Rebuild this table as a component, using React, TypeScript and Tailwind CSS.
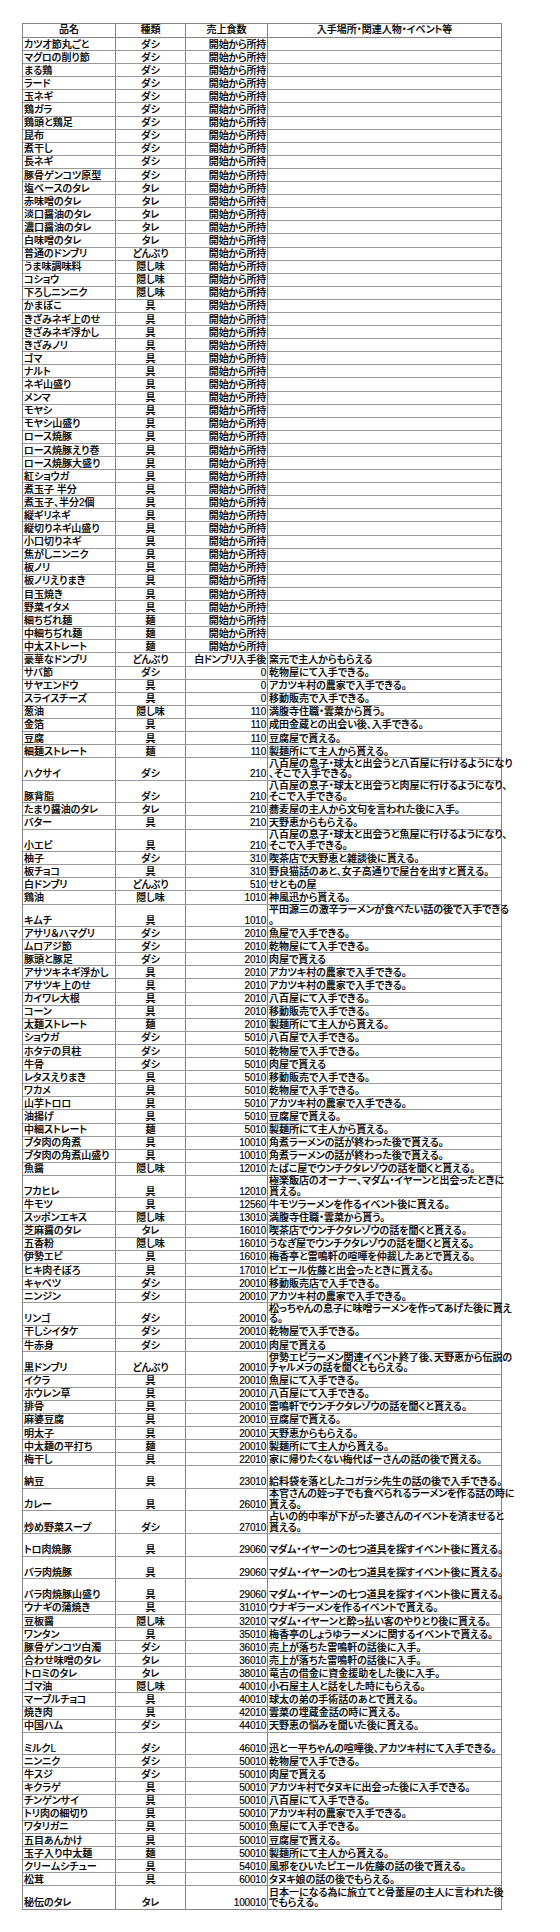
import React from "react";

type Row = [string, string, string, string, boolean?];

const START = "開始から所持";

const starters: [string, string][] = [
  ["カツオ節丸ごと", "ダシ"],
  ["マグロの削り節", "ダシ"],
  ["まる鶏", "ダシ"],
  ["ラード", "ダシ"],
  ["玉ネギ", "ダシ"],
  ["鶏ガラ", "ダシ"],
  ["鶏頭と鶏足", "ダシ"],
  ["昆布", "ダシ"],
  ["煮干し", "ダシ"],
  ["長ネギ", "ダシ"],
  ["豚骨ゲンコツ原型", "ダシ"],
  ["塩ベースのタレ", "タレ"],
  ["赤味噌のタレ", "タレ"],
  ["淡口醤油のタレ", "タレ"],
  ["濃口醤油のタレ", "タレ"],
  ["白味噌のタレ", "タレ"],
  ["普通のドンブリ", "どんぶり"],
  ["うま味調味料", "隠し味"],
  ["コショウ", "隠し味"],
  ["下ろしニンニク", "隠し味"],
  ["かまぼこ", "具"],
  ["きざみネギ上のせ", "具"],
  ["きざみネギ浮かし", "具"],
  ["きざみノリ", "具"],
  ["ゴマ", "具"],
  ["ナルト", "具"],
  ["ネギ山盛り", "具"],
  ["メンマ", "具"],
  ["モヤシ", "具"],
  ["モヤシ山盛り", "具"],
  ["ロース焼豚", "具"],
  ["ロース焼豚えり巻", "具"],
  ["ロース焼豚大盛り", "具"],
  ["紅ショウガ", "具"],
  ["煮玉子 半分", "具"],
  ["煮玉子、半分2個", "具"],
  ["縦ギリネギ", "具"],
  ["縦切りネギ山盛り", "具"],
  ["小口切りネギ", "具"],
  ["焦がしニンニク", "具"],
  ["板ノリ", "具"],
  ["板ノリえりまき", "具"],
  ["目玉焼き", "具"],
  ["野菜イタメ", "具"],
  ["細ちぢれ麺", "麺"],
  ["中細ちぢれ麺", "麺"],
  ["中太ストレート", "麺"],
];

const madam = "マダム・イヤーンの七つ道具を探すイベント後に貰える。";

const rows: Row[] = [
  ...starters.map(([n, t]): Row => [n, t, START, ""]),
  ["豪華なドンブリ", "どんぶり", "白ドンブリ入手後", "窯元で主人からもらえる"],
  ["サバ節", "ダシ", "0", "乾物屋にて入手できる。"],
  ["サヤエンドウ", "具", "0", "アカツキ村の農家で入手できる。"],
  ["スライスチーズ", "具", "0", "移動販売で入手できる。"],
  ["葱油", "隠し味", "110", "満腹寺住職・雲菜から貰う。"],
  ["金箔", "具", "110", "成田金蔵との出会い後、入手できる。"],
  ["豆腐", "具", "110", "豆腐屋で貰える。"],
  ["細麺ストレート", "麺", "110", "製麺所にて主人から貰える。"],
  ["ハクサイ", "ダシ", "210", "八百屋の息子・球太と出会うと八百屋に行けるようになり\n、そこで入手できる。"],
  ["豚背脂", "ダシ", "210", "八百屋の息子・球太と出会うと肉屋に行けるようになり、\nそこで入手できる。"],
  ["たまり醤油のタレ", "タレ", "210", "蕎麦屋の主人から文句を言われた後に入手。"],
  ["バター", "具", "210", "天野恵からもらえる。"],
  ["小エビ", "具", "210", "八百屋の息子・球太と出会うと魚屋に行けるようになり、\nそこで入手できる。"],
  ["柚子", "ダシ", "310", "喫茶店で天野恵と雑談後に貰える。"],
  ["板チョコ", "具", "310", "野良猫話のあと、女子高通りで屋台を出すと貰える。"],
  ["白ドンブリ", "どんぶり", "510", "せともの屋"],
  ["鶏油", "隠し味", "1010", "神風迅から貰える。"],
  ["キムチ", "具", "1010", "平田源三の激辛ラーメンが食べたい話の後で入手できる\n。"],
  ["アサリ＆ハマグリ", "ダシ", "2010", "魚屋で入手できる。"],
  ["ムロアジ節", "ダシ", "2010", "乾物屋にて入手できる。"],
  ["豚頭と豚足", "ダシ", "2010", "肉屋で貰える"],
  ["アサツキネギ浮かし", "具", "2010", "アカツキ村の農家で入手できる。"],
  ["アサツキ上のせ", "具", "2010", "アカツキ村の農家で入手できる。"],
  ["カイワレ大根", "具", "2010", "八百屋にて入手できる。"],
  ["コーン", "具", "2010", "移動販売で入手できる。"],
  ["太麺ストレート", "麺", "2010", "製麺所にて主人から貰える。"],
  ["ショウガ", "ダシ", "5010", "八百屋で入手できる。"],
  ["ホタテの貝柱", "ダシ", "5010", "乾物屋で入手できる。"],
  ["牛骨", "ダシ", "5010", "肉屋で貰える"],
  ["レタスえりまき", "具", "5010", "移動販売で入手できる。"],
  ["ワカメ", "具", "5010", "乾物屋で入手できる。"],
  ["山芋トロロ", "具", "5010", "アカツキ村の農家で入手できる。"],
  ["油揚げ", "具", "5010", "豆腐屋で貰える。"],
  ["中細ストレート", "麺", "5010", "製麺所にて主人から貰える。"],
  ["ブタ肉の角煮", "具", "10010", "角煮ラーメンの話が終わった後で貰える。"],
  ["ブタ肉の角煮山盛り", "具", "10010", "角煮ラーメンの話が終わった後で貰える。"],
  ["魚醤", "隠し味", "12010", "たばこ屋でウンチクタレゾウの話を聞くと貰える。"],
  ["フカヒレ", "具", "12010", "極楽飯店のオーナー、マダム・イヤーンと出会ったときに\n貰える。"],
  ["牛モツ", "具", "12560", "牛モツラーメンを作るイベント後に貰える。"],
  ["スッポンエキス", "隠し味", "13010", "満腹寺住職・雲菜から貰う。"],
  ["芝麻醤のタレ", "タレ", "16010", "喫茶店でウンチクタレゾウの話を聞くと貰える。"],
  ["五香粉", "隠し味", "16010", "うなぎ屋でウンチクタレゾウの話を聞くと貰える。"],
  ["伊勢エビ", "具", "16010", "梅香亭と雷鳴軒の喧嘩を仲裁したあとで貰える。"],
  ["ヒキ肉そぼろ", "具", "17010", "ピエール佐藤と出会ったときに貰える。"],
  ["キャベツ", "ダシ", "20010", "移動販売店で入手できる。"],
  ["ニンジン", "ダシ", "20010", "アカツキ村の農家で入手できる。"],
  ["リンゴ", "ダシ", "20010", "松っちゃんの息子に味噌ラーメンを作ってあげた後に貰え\nる。"],
  ["干しシイタケ", "ダシ", "20010", "乾物屋で入手できる。"],
  ["牛赤身", "ダシ", "20010", "肉屋で貰える"],
  ["黒ドンブリ", "どんぶり", "20010", "伊勢エビラーメン関連イベント終了後、天野恵から伝説の\nチャルメラの話を聞くともらえる。"],
  ["イクラ", "具", "20010", "魚屋にて入手できる。"],
  ["ホウレン草", "具", "20010", "八百屋にて入手できる。"],
  ["排骨", "具", "20010", "雷鳴軒でウンチクタレゾウの話を聞くと貰える。"],
  ["麻婆豆腐", "具", "20010", "豆腐屋で貰える。"],
  ["明太子", "具", "20010", "天野恵からもらえる。"],
  ["中太麺の平打ち", "麺", "20010", "製麺所にて主人から貰える。"],
  ["梅干し", "具", "22010", "家に帰りたくない梅代ばーさんの話の後で貰える。"],
  ["納豆", "具", "23010", "給料袋を落としたコガラシ先生の話の後で入手できる。", true],
  ["カレー", "具", "26010", "本官さんの姪っ子でも食べられるラーメンを作る話の時に\n貰える。"],
  ["炒め野菜スープ", "ダシ", "27010", "占いの的中率が下がった婆さんのイベントを済ませると\n貰える。"],
  ["トロ肉焼豚", "具", "29060", madam, true],
  ["バラ肉焼豚", "具", "29060", madam, true],
  ["バラ肉焼豚山盛り", "具", "29060", madam, true],
  ["ウナギの蒲焼き", "具", "31010", "ウナギラーメンを作るイベントで貰える。"],
  ["豆板醤", "隠し味", "32010", "マダム・イヤーンと酔っ払い客のやりとり後に貰える。"],
  ["ワンタン", "具", "35010", "梅香亭のしょうゆラーメンに関するイベントで貰える。"],
  ["豚骨ゲンコツ白濁", "ダシ", "36010", "売上が落ちた雷鳴軒の話後に入手。"],
  ["合わせ味噌のタレ", "タレ", "36010", "売上が落ちた雷鳴軒の話後に入手。"],
  ["トロミのタレ", "タレ", "38010", "竜吉の借金に資金援助をした後に入手。"],
  ["ゴマ油", "隠し味", "40010", "小石屋主人と話をした時にもらえる。"],
  ["マーブルチョコ", "具", "40010", "球太の弟の手術話のあとで貰える。"],
  ["焼き肉", "具", "42010", "雲菜の埋蔵金話の時に貰える。"],
  ["中国ハム", "ダシ", "44010", "天野恵の悩みを聞いた後に貰える。"],
  ["ミルクL", "ダシ", "46010", "迅と一平ちゃんの喧嘩後、アカツキ村にて入手できる。", true],
  ["ニンニク", "ダシ", "50010", "乾物屋で入手できる。"],
  ["牛スジ", "ダシ", "50010", "肉屋で貰える"],
  ["キクラゲ", "具", "50010", "アカツキ村でタヌキに出会った後に入手できる。"],
  ["チンゲンサイ", "具", "50010", "八百屋にて入手できる。"],
  ["トリ肉の細切り", "具", "50010", "アカツキ村の農家で入手できる。"],
  ["ワタリガニ", "具", "50010", "魚屋にて入手できる。"],
  ["五目あんかけ", "具", "50010", "豆腐屋で貰える。"],
  ["玉子入り中太麺", "麺", "50010", "製麺所にて主人から貰える。"],
  ["クリームシチュー", "具", "54010", "風邪をひいたピエール佐藤の話の後で貰える。"],
  ["松茸", "具", "60010", "タヌキ娘の話の後でもらえる。"],
  ["秘伝のタレ", "タレ", "100010", "日本一になる為に旅立てと骨董屋の主人に言われた後\nでもらえる。"],
];

const font =
  "font-['Liberation_Sans','Noto_Sans_CJK_JP',sans-serif] [font-feature-settings:'palt']";

function TableRow({ row }: { row: Row }) {
  const [name, kind, sales, note, tall] = row;
  const lines = note.split("\n");
  const isTall = tall || lines.length > 1;
  return (
    <div
      className={`flex border-b border-[#999999] last:border-b-0 ${
        isTall ? "h-[22.6px]" : "h-[13.1px]"
      }`}
    >
      <div className="w-[93px] shrink-0 flex items-end pl-[1px] border-r border-[#858585] whitespace-nowrap overflow-hidden">
        {name}
      </div>
      <div className="w-[70px] shrink-0 flex items-end justify-center border-r border-[#858585] whitespace-nowrap">
        {kind}
      </div>
      <div className="w-[82px] shrink-0 flex items-end justify-end pr-[1px] border-r border-[#858585] whitespace-nowrap tracking-[-0.2px]">
        {sales}
      </div>
      <div className="flex-1 min-w-0 flex flex-col justify-end pl-[1px] whitespace-nowrap">
        {lines.map((l, i) => (
          <span key={i}>{l}</span>
        ))}
      </div>
    </div>
  );
}

export default function App() {
  return (
    <div className={`w-[560px] h-[1932px] bg-white pt-[23px] pl-[22px] ${font}`}>
      <div className="w-[480px] border border-[#858585] text-[10px] leading-[10.5px] font-medium text-black [-webkit-text-stroke:0.15px_black]">
        <div className="flex h-[14px] border-b border-[#858585]">
          <div className="w-[93px] flex items-center justify-center border-r border-[#858585]">品名</div>
          <div className="w-[70px] flex items-center justify-center border-r border-[#858585]">種類</div>
          <div className="w-[82px] flex items-center justify-center border-r border-[#858585]">売上食数</div>
          <div className="flex-1 flex items-center justify-center">入手場所・関連人物・イベント等</div>
        </div>
        {rows.map((r, i) => (
          <TableRow key={i} row={r} />
        ))}
      </div>
    </div>
  );
}
